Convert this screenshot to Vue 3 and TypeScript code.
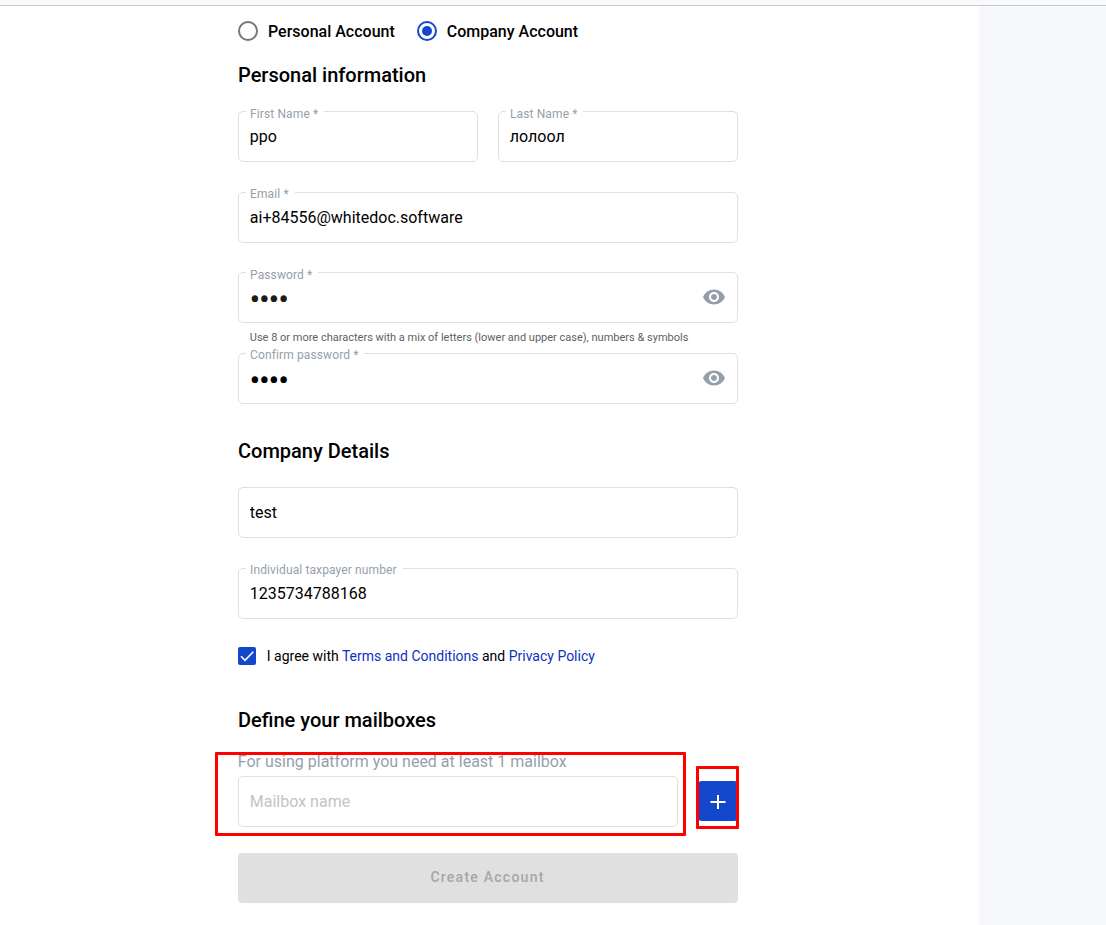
<script setup lang="ts">
import { ref } from 'vue'

interface Field {
  key: string
  label: string
  value: string
  type: 'text' | 'password'
  hint?: string
}

const accountType = ref<'personal' | 'company'>('company')
const accountTypes = [
  { id: 'personal', label: 'Personal Account' },
  { id: 'company', label: 'Company Account' },
] as const

const names = ref<Field[]>([
  { key: 'first', label: 'First Name *', value: 'ppo', type: 'text' },
  { key: 'last', label: 'Last Name *', value: 'лолоол', type: 'text' },
])
const credentials = ref<Field[]>([
  { key: 'email', label: 'Email *', value: 'ai+84556@whitedoc.software', type: 'text' },
  {
    key: 'password',
    label: 'Password *',
    value: 'test',
    type: 'password',
    hint: 'Use 8 or more characters with a mix of letters (lower and upper case), numbers & symbols',
  },
  { key: 'confirm', label: 'Confirm password *', value: 'test', type: 'password' },
])
const company = ref<Field[]>([
  { key: 'company', label: '', value: 'test', type: 'text' },
  { key: 'tax', label: 'Individual taxpayer number', value: '1235734788168', type: 'text' },
])
const mailbox = ref('')
</script>

<template>
  <div class="page">
    <header class="topbar"></header>
    <div class="body">
      <main class="main">
        <form class="form" @submit.prevent>
          <div class="radios">
            <label v-for="t in accountTypes" :key="t.id" class="radio" @click="accountType = t.id">
              <span class="ring" :class="{ on: accountType === t.id }"></span>
              <span class="radio-text">{{ t.label }}</span>
            </label>
          </div>

          <h2 class="title personal">Personal information</h2>
          <div class="names">
            <div v-for="f in names" :key="f.key" class="field">
              <span class="label">{{ f.label }}</span>
              <input v-model="f.value" class="input" :type="f.type" />
            </div>
          </div>
          <div v-for="f in credentials" :key="f.key" class="row" :class="f.key">
            <div class="field">
              <span class="label">{{ f.label }}</span>
              <input v-model="f.value" class="input" :class="{ secret: f.type === 'password' }" :type="f.type" />
              <svg v-if="f.type === 'password'" class="eye" viewBox="0 0 24 24">
                <path
                  d="M12 4.5C7 4.5 2.73 7.61 1 12c1.73 4.39 6 7.5 11 7.5s9.27-3.11 11-7.5c-1.73-4.39-6-7.5-11-7.5zM12 17c-2.76 0-5-2.24-5-5s2.24-5 5-5 5 2.24 5 5-2.24 5-5 5zm0-8c-1.66 0-3 1.34-3 3s1.34 3 3 3 3-1.34 3-3-1.34-3-3-3z"
                />
              </svg>
            </div>
            <div v-if="f.hint" class="hint">{{ f.hint }}</div>
          </div>

          <h2 class="title details">Company Details</h2>
          <div v-for="f in company" :key="f.key" class="field" :class="f.key">
            <span v-if="f.label" class="label">{{ f.label }}</span>
            <input v-model="f.value" class="input" :class="{ plain: !f.label }" :type="f.type" />
          </div>

          <div class="agree">
            <span class="check">
              <svg viewBox="0 0 18 18"><path d="M3 9.3l4 4L15.3 4.8" /></svg>
            </span>
            <span>I agree with <a>Terms and Conditions</a> and <a>Privacy Policy</a></span>
          </div>

          <h2 class="title boxes">Define your mailboxes</h2>
          <div class="mailbox">
            <p class="note">For using platform you need at least 1 mailbox</p>
            <div class="mailrow">
              <div class="field">
                <input v-model="mailbox" class="input plain" placeholder="Mailbox name" />
              </div>
              <button class="add" type="button" aria-label="Add">
                <svg viewBox="0 0 16 16"><path d="M8 1v14M0.5 8h15" /></svg>
              </button>
            </div>
            <div class="mark mark-input"></div>
            <div class="mark mark-add"></div>
          </div>
          <button class="submit" type="submit" disabled>Create Account</button>
        </form>
      </main>
      <aside class="side"></aside>
    </div>
  </div>
</template>

<style>
body {
  margin: 0;
  overflow: hidden;
}
</style>

<style scoped>
.page {
  height: 925px;
  display: flex;
  flex-direction: column;
  overflow: hidden;
  font-family: Roboto, "Liberation Sans", sans-serif;
  font-size: 16px;
  color: #000;
  background: #fff;
}
.page * {
  box-sizing: border-box;
}
.topbar {
  flex: none;
  height: 6px;
  background: #f8f9fb;
  border-bottom: 1px solid #c8c8cb;
}
.body {
  flex: 1;
  display: flex;
}
.main {
  width: 979px;
  padding: 15px 0 0 238px;
}
.side {
  flex: 1;
  background: #f6f8fa;
}
.form {
  width: 500px;
}
.radios {
  display: flex;
  gap: 22px;
  height: 20px;
}
.radio {
  display: flex;
  align-items: center;
  gap: 10px;
  font-weight: 500;
  line-height: 20px;
}
.radio-text {
  padding-top: 2px;
}
.ring {
  display: flex;
  align-items: center;
  justify-content: center;
  width: 20px;
  height: 20px;
  border: 2px solid #757575;
  border-radius: 50%;
}
.ring.on {
  border-color: #1447cc;
}
.ring.on::after {
  content: "";
  width: 10px;
  height: 10px;
  border-radius: 50%;
  background: #1447cc;
}
.title {
  margin: 0;
  height: 24px;
  line-height: 24px;
  font-size: 20px;
  font-weight: 500;
}
.personal {
  margin-top: 22px;
}
.names {
  display: grid;
  grid-template-columns: 1fr 1fr;
  gap: 20px;
  margin-top: 24px;
}
.field {
  position: relative;
  height: 51px;
}
.input {
  display: block;
  width: 100%;
  height: 51px;
  margin: 0;
  padding: 0 11px 1px 10.8px;
  border: 1px solid #dfdfdf;
  border-radius: 5px;
  outline: none;
  background: transparent;
  font: 16px Roboto, "Liberation Sans", sans-serif;
  color: #000;
}
.input.plain {
  padding-bottom: 0;
}
.input.secret {
  padding: 2px 11px 0 10.4px;
  font-size: 32px;
  letter-spacing: -1.2px;
}
.password .input.secret {
  color: #1c1c14;
}
.input::placeholder {
  color: #c4c4c4;
  opacity: 1;
}
.label {
  position: absolute;
  left: 8px;
  top: -5px;
  padding: 0 5.8px 0 4px;
  background: #fff;
  font-size: 12px;
  line-height: 14px;
  letter-spacing: 0.12px;
  color: #959fab;
  white-space: nowrap;
}
.names .label,
.password .label {
  top: -4px;
}
.email {
  margin-top: 30px;
}
.password {
  margin-top: 29px;
}
.hint {
  height: 30px;
  padding: 8px 11.8px 0;
  font-size: 11px;
  line-height: 13px;
  color: #5f5f5f;
  white-space: nowrap;
}
.eye {
  position: absolute;
  right: 12px;
  top: 13px;
  width: 24px;
  height: 24px;
  fill: #959fab;
}
.details {
  margin: 35px 0 24px;
}
.tax {
  margin-top: 30px;
}
.agree {
  display: flex;
  align-items: center;
  gap: 10.8px;
  height: 18px;
  margin-top: 28px;
  font-size: 14px;
}
.agree a {
  color: #0f2fc0;
}
.check {
  width: 18px;
  height: 18px;
  border-radius: 2px;
  background: #1447cc;
}
.check svg {
  display: block;
  width: 18px;
  height: 18px;
  fill: none;
  stroke: #fff;
  stroke-width: 1.6;
}
.boxes {
  margin-top: 43px;
}
.mailbox {
  position: relative;
  margin-top: 20px;
}
.note {
  margin: 0 0 0 -0.2px;
  height: 24px;
  line-height: 19px;
  color: #959fab;
}
.mailrow {
  display: flex;
  align-items: flex-start;
  gap: 20px;
}
.mailrow .field {
  width: 440px;
}
.add {
  display: flex;
  align-items: center;
  justify-content: center;
  flex: none;
  width: 40px;
  height: 40px;
  margin-top: 5px;
  padding: 2px 1px 0 0;
  border: 0;
  border-radius: 4px;
  background: #1447cc;
}
.add svg {
  width: 16px;
  height: 16px;
  fill: none;
  stroke: #fff;
  stroke-width: 2;
}
.mark {
  position: absolute;
  border: 3px solid #f00;
  border-radius: 1px;
  pointer-events: none;
}
.mark-input {
  left: -23px;
  top: 0;
  width: 471px;
  height: 84px;
}
.mark-add {
  left: 458px;
  top: 14px;
  width: 43px;
  height: 63px;
}
.submit {
  display: block;
  width: 500px;
  height: 50px;
  margin-top: 26px;
  padding: 0 1px 2px 0;
  border: 0;
  border-radius: 4px;
  background: #e0e0e0;
  color: #a6a6a6;
  font: 500 14px Roboto, "Liberation Sans", sans-serif;
  letter-spacing: 1.25px;
}
</style>
